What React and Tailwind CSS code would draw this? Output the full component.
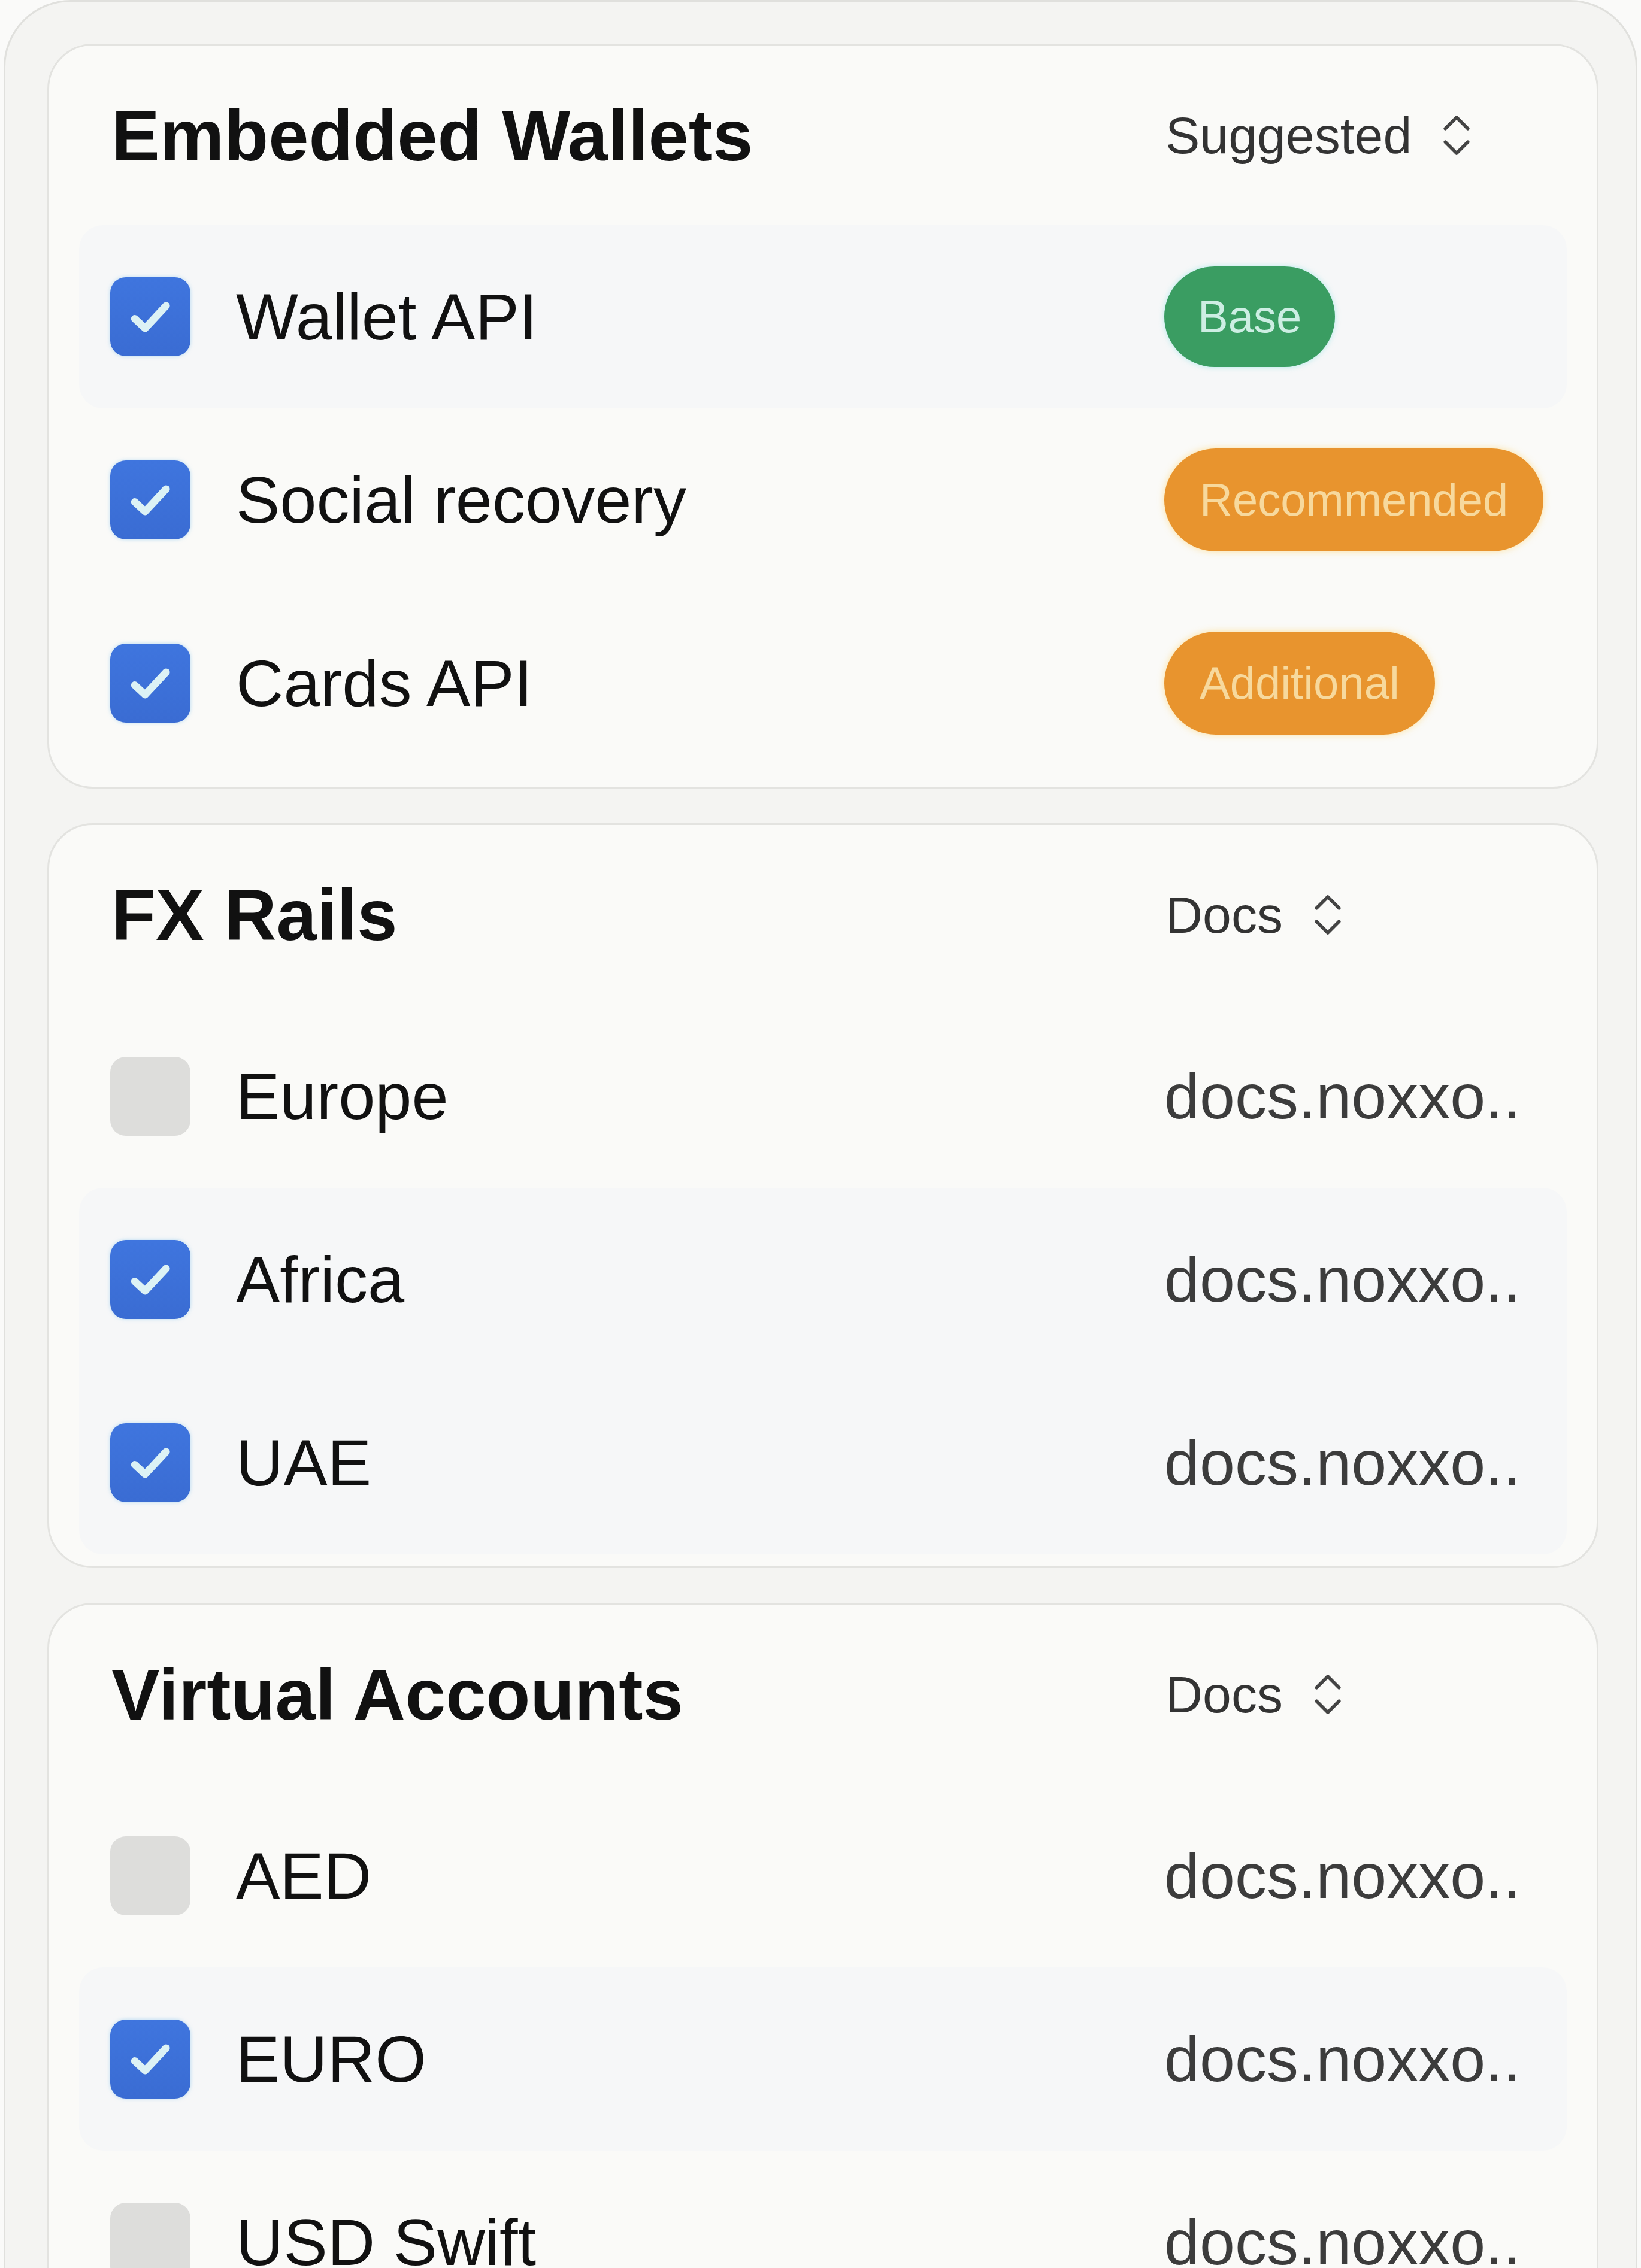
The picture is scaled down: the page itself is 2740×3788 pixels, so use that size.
import { ChevronsUpDown } from 'lucide-react';

const sections = [
  {
    title: 'Embedded Wallets',
    control: 'Suggested',
    rows: [
      { label: 'Wallet API', checked: true, badge: 'Base', tone: 'green', active: true },
      { label: 'Social recovery', checked: true, badge: 'Recommended', tone: 'orange' },
      { label: 'Cards API', checked: true, badge: 'Additional', tone: 'orange' },
    ],
  },
  {
    title: 'FX Rails',
    control: 'Docs',
    rows: [
      { label: 'Europe', checked: false, link: 'docs.noxxo..' },
      { label: 'Africa', checked: true, link: 'docs.noxxo..', active: true },
      { label: 'UAE', checked: true, link: 'docs.noxxo..', active: true },
    ],
  },
  {
    title: 'Virtual Accounts',
    control: 'Docs',
    rows: [
      { label: 'AED', checked: false, link: 'docs.noxxo..' },
      { label: 'EURO', checked: true, link: 'docs.noxxo..', active: true },
      { label: 'USD Swift', checked: false, link: 'docs.noxxo..' },
    ],
  },
];

const Checkbox = ({ checked }) =>
  checked ? (
    <div className="w-[134px] h-[132px] rounded-[26px] bg-gradient-to-b from-[#3f75de] to-[#3a6cd3] shadow-[0_0_6px_rgba(140,200,240,0.6)] flex items-center justify-center shrink-0">
      <svg width="96" height="96" viewBox="0 0 24 24" fill="none">
        <path d="M5.5 12.8l4.3 4L18.6 7.4" stroke="#dcf2f5" strokeWidth="3.1" strokeLinecap="round" strokeLinejoin="round" />
      </svg>
    </div>
  ) : (
    <div className="w-[134px] h-[132px] rounded-[26px] bg-[#dddddb] shrink-0" />
  );

const Badge = ({ text, tone }) => (
  <span
    className={
      tone === 'green'
        ? 'h-[168px] px-[56px] rounded-full flex items-center bg-[#3a9d62] text-[#cdeee3] text-[76px] shadow-[0_0_10px_rgba(150,230,230,0.7)]'
        : 'h-[172px] px-[59px] rounded-full flex items-center bg-[#e8942e] text-[#f7d99d] text-[76px] shadow-[0_0_12px_rgba(255,215,120,0.7)]'
    }
  >
    {text}
  </span>
);

const Section = ({ section }) => (
  <div className="rounded-[76px] border-[3px] border-[#e3e3e0] bg-[#fafaf8] pb-[20px]">
    <div className="h-[300px] flex items-center pl-[104px]">
      <h2 className="w-[1760px] text-[121px] font-bold leading-none text-[#111]">
        {section.title}
      </h2>
      <div className="flex items-center gap-[30px] text-[86px] text-[#333] leading-none">
        <span>{section.control}</span>
        <ChevronsUpDown size={90} strokeWidth={1.5} className="text-[#444]" />
      </div>
    </div>
    <div className="flex flex-col">
      {section.rows.map((row, i) => {
        const prev = section.rows[i - 1];
        const next = section.rows[i + 1];
        const top = row.active && !(prev && prev.active) ? 'rounded-t-[40px]' : '';
        const bottom = row.active && !(next && next.active) ? 'rounded-b-[40px]' : '';
        return (
          <div
            key={row.label}
            className={`mx-[50px] h-[306px] pl-[52px] flex items-center ${row.active ? 'bg-[#f6f7f8]' : ''} ${top} ${bottom}`}
          >
            <div className="w-[1760px] flex items-center gap-[76px]">
              <Checkbox checked={row.checked} />
              <span className="text-[110px] leading-none text-[#111]">{row.label}</span>
            </div>
            {row.badge ? (
              <Badge text={row.badge} tone={row.tone} />
            ) : (
              <span className="text-[106px] leading-none text-[#3c3c3c]">{row.link}</span>
            )}
          </div>
        );
      })}
    </div>
  </div>
);

const App = () => {
  return (
    <div
      className="w-[2740px] h-[3788px] overflow-hidden bg-[#fafaf9]"
      style={{ fontFamily: '"Liberation Sans", Arial, sans-serif' }}
    >
      <div className="ml-[6px] mr-[6px] h-[3900px] rounded-t-[112px] border-[3px] border-[#e0e0dd] bg-[#f4f4f2] pt-[70px] pl-[70px] pr-[62px] flex flex-col gap-[58px]">
        {sections.map((s) => (
          <Section key={s.title} section={s} />
        ))}
      </div>
    </div>
  );
};

export default App;
